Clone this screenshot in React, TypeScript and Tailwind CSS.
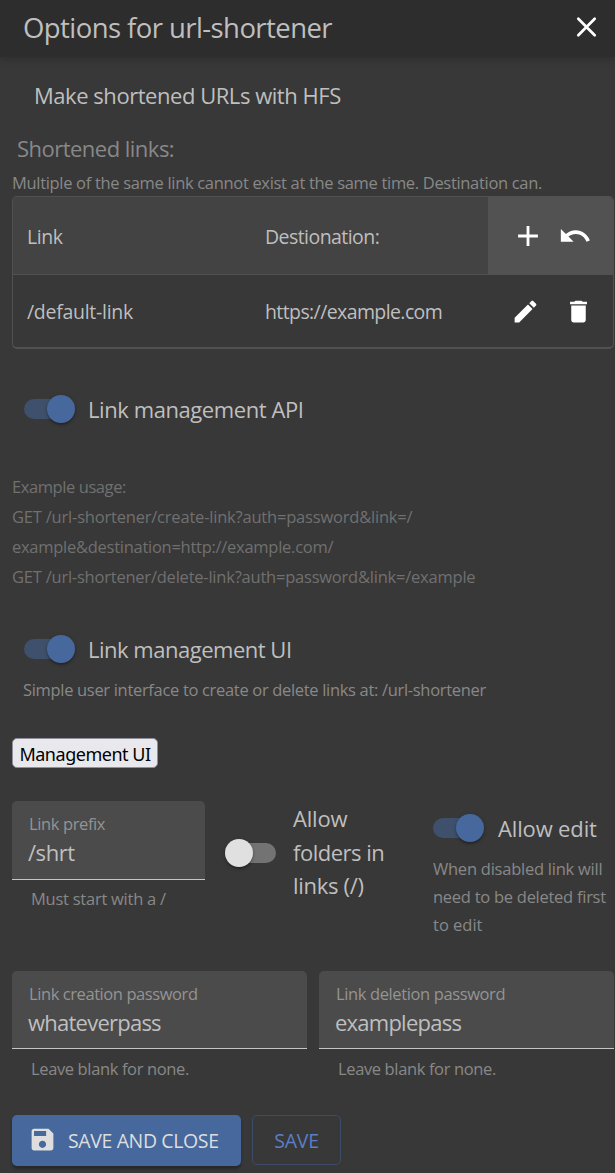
import type { ReactNode } from 'react';

function Icon({ d, className }: { d: string; className: string }) {
  return (
    <svg viewBox="0 0 24 24" fill="currentColor" className={className} aria-hidden="true">
      <path d={d} />
    </svg>
  );
}

const icons = {
  add: 'M19 13h-6v6h-2v-6H5v-2h6V5h2v6h6v2z',
  undo: 'M12.5 8c-2.65 0-5.05.99-6.9 2.6L2 7v9h9l-3.62-3.62c1.39-1.16 3.16-1.88 5.12-1.88 3.54 0 6.55 2.31 7.6 5.5l2.37-.78C21.08 11.03 17.15 8 12.5 8z',
  edit: 'M3 17.25V21h3.75L17.81 9.94l-3.75-3.75L3 17.25zM20.71 7.04c.39-.39.39-1.02 0-1.41l-2.34-2.34a.9959.9959 0 0 0-1.41 0l-1.83 1.83 3.75 3.75 1.83-1.83z',
  trash: 'M6 19c0 1.1.9 2 2 2h8c1.1 0 2-.9 2-2V7H6v12zM19 4h-3.5l-1-1h-5l-1 1H5v2h14V4z',
  save: 'M17 3H5c-1.11 0-2 .9-2 2v14c0 1.1.89 2 2 2h14c1.1 0 2-.9 2-2V7l-4-4zm-5 16c-1.66 0-3-1.34-3-3s1.34-3 3-3 3 1.34 3 3-1.34 3-3 3zm3-10H5V5h10v4z',
};

function Switch({ on }: { on: boolean }) {
  return (
    <button
      role="switch"
      aria-checked={on}
      className={`grid h-7 w-[51px] shrink-0 items-center ${on ? 'justify-items-end' : 'justify-items-start'}`}
    >
      <span
        className={`col-start-1 row-start-1 h-5 w-12 rounded-full ${on ? 'justify-self-start bg-[#3e506b]' : 'justify-self-end bg-[#737373]'}`}
      />
      <span
        className={`col-start-1 row-start-1 size-7 rounded-full shadow-[0_2px_2px_rgba(0,0,0,0.25),0_1px_4px_rgba(0,0,0,0.15)] ${on ? 'bg-[#46689d]' : 'bg-[#e0e0e0]'}`}
      />
    </button>
  );
}

interface FieldProps {
  label: ReactNode;
  value: ReactNode;
  helper: ReactNode;
  width: string;
  box: string;
}

function Field({ label, value, helper, width, box }: FieldProps) {
  return (
    <div className={`flex shrink-0 flex-col ${width}`}>
      <div className={`rounded-t-[5px] border-b border-[#c6c6c6] bg-[#4b4b4b] pt-3 pl-4 ${box}`}>
        <div className="h-[22px] pl-px text-[16.5px] leading-[22px] text-[#949494]">{label}</div>
        <div className="mt-0.5 h-[30px] text-[22px] leading-[30px] text-[#bfbfbf]">{value}</div>
      </div>
      <div className="h-[22px] pl-[19px] text-[16.5px] leading-[22px] text-[#888888]">{helper}</div>
    </div>
  );
}

export default function App() {
  return (
    <div className="flex h-[1173px] w-[615px] flex-col overflow-hidden bg-[#383838] font-['Open_Sans',sans-serif] whitespace-nowrap text-[#bfbfbf]">
      <header className="flex h-[57px] shrink-0 items-center justify-between bg-[#2d2d2d] pr-[15px] pb-[3px] pl-[23px] shadow-[0_2px_9px_rgba(0,0,0,0.22)]">
        <h1 className="pt-0.5 text-[27.5px] leading-9 tracking-[-0.57px]">Options for url-shortener</h1>
        <button className="text-white" aria-label="Close">
          <svg viewBox="0 0 27 27" className="size-[27px]" fill="none" stroke="currentColor" strokeWidth="2.7" strokeLinecap="round">
            <path d="M5.3 4.8 21.7 21.2M21.7 4.8 5.3 21.2" />
          </svg>
        </button>
      </header>

      <main className="flex flex-col pl-3">
        <p className="mt-[22px] h-[33px] pl-[22px] text-[22px] leading-[33px] tracking-[-0.46px]">Make shortened URLs with HFS</p>
        <h2 className="mt-[23px] h-[26px] pl-[5px] text-[22px] leading-[26px] tracking-[-0.52px] text-[#888888]">Shortened links:</h2>
        <p className="mt-[11px] h-[22px] text-[16.5px] leading-[22px] tracking-[-0.32px] text-[#888888]">
          Multiple of the same link cannot exist at the same time. Destination can.
        </p>

        <section className="mt-0.5 flex h-[153px] w-[602px] flex-col overflow-hidden rounded-[5px] border border-b-2 border-[#515151] text-[19.5px]">
          <div className="flex h-[78px] border-b border-[#515151] bg-[#434343]">
            <div className="flex w-[238px] items-center pt-0.5 pl-[14px] tracking-[-0.45px]">Link</div>
            <div className="flex w-[237px] items-center pt-0.5 pl-[14px] tracking-[-0.56px]">Destionation:</div>
            <div className="flex flex-1 items-center gap-[13px] bg-[#525252] pl-[23px] text-white">
              <Icon d={icons.add} className="size-[34px]" />
              <Icon d={icons.undo} className="size-[34px]" />
            </div>
          </div>
          <div className="flex flex-1">
            <div className="flex w-[238px] items-center pt-0.5 pl-[14px] tracking-[-0.28px]">/default-link</div>
            <div className="flex w-[237px] items-center pt-0.5 pl-[14px] tracking-[-0.6px]">https://example.com</div>
            <div className="flex flex-1 items-center gap-6 pl-[23px] text-white">
              <Icon d={icons.edit} className="size-[29px]" />
              <Icon d={icons.trash} className="size-[29px]" />
            </div>
          </div>
        </section>

        <div className="mt-[45px] flex h-[30px] items-center pl-3">
          <Switch on />
          <span className="pb-px pl-[13px] text-[22px] leading-[30px] tracking-[-0.42px]">Link management API</span>
        </div>

        <div className="mt-12 text-[16.5px] leading-[30px] text-[#707070]">
          <p className="tracking-[-0.42px]">Example usage:</p>
          <p className="tracking-[-0.2px]">GET /url-shortener/create-link?auth=password&amp;link=/</p>
          <p className="tracking-[-0.27px]">example&amp;destination=http://example.com/</p>
          <p className="tracking-[-0.22px]">GET /url-shortener/delete-link?auth=password&amp;link=/example</p>
        </div>

        <div className="mt-[42px] flex h-[30px] items-center pl-3">
          <Switch on />
          <span className="pb-px pl-[13px] text-[22px] leading-[30px] tracking-[-0.49px]">Link management UI</span>
        </div>
        <p className="mt-[15px] h-[22px] pl-[11px] text-[16.5px] leading-[22px] tracking-[-0.32px] text-[#888888]">
          Simple user interface to create or delete links at: /url-shortener
        </p>

        <button className="mt-[37px] flex h-[30px] w-[146px] items-center justify-center rounded-[5px] border border-[#8f8f9d] bg-[#e9e9ed] pt-0.5 font-['Noto_Sans',sans-serif] text-[18px] leading-6 tracking-[-0.48px] text-black">
          Management UI
        </button>

        <div className="mt-[33px] flex h-[170px]">
          <Field
            width="w-[193px]"
            box="h-[79px] mb-2"
            label={<span className="tracking-[-0.38px]">Link prefix</span>}
            value={<span className="tracking-[-0.45px]">/shrt</span>}
            helper={<span className="tracking-[-0.25px]">Must start with a /</span>}
          />
          <div className="ml-5 flex h-[103px] items-center">
            <Switch on={false} />
            <div className="pl-[17px] text-[22px] leading-[33.5px]">
              <p className="tracking-[-0.2px]">Allow</p>
              <p className="tracking-[-0.5px]">folders in</p>
              <p className="tracking-[-0.3px]">links (/)</p>
            </div>
          </div>
          <div className="flex w-[182px] flex-col pl-0 ml-auto">
            <div className="mt-[13px] flex h-7 items-center">
              <Switch on />
              <span className="pb-px pl-[14px] text-[22px] leading-7 tracking-[-0.15px]">Allow edit</span>
            </div>
            <div className="mt-[13px] text-[16.5px] leading-7 text-[#888888]">
              <p className="tracking-[-0.24px]">When disabled link will</p>
              <p className="tracking-[-0.27px]">need to be deleted first</p>
              <p>to edit</p>
            </div>
          </div>
        </div>

        <div className="flex h-36 gap-3">
          <Field
            width="w-[295px]"
            box="h-[78px] mb-[9px]"
            label={<span className="tracking-[-0.42px]">Link creation password</span>}
            value={<span className="tracking-[-0.76px]">whateverpass</span>}
            helper={<span className="tracking-[-0.37px]">Leave blank for none.</span>}
          />
          <Field
            width="w-[295px]"
            box="h-[78px] mb-[9px]"
            label={<span className="tracking-[-0.38px]">Link deletion password</span>}
            value={<span className="tracking-[-0.76px]">examplepass</span>}
            helper={<span className="tracking-[-0.37px]">Leave blank for none.</span>}
          />
        </div>

        <div className="flex items-start gap-[11px] text-[19.5px]">
          <button className="flex h-[51px] w-[229px] items-center rounded-[5px] bg-[#46689d] pl-4 text-[#dedede] shadow-[0_3px_3px_rgba(0,0,0,0.3)]">
            <Icon d={icons.save} className="mb-0.5 size-[29px]" />
            <span className="pt-px pl-[11px] tracking-[-0.38px]">SAVE AND CLOSE</span>
          </button>
          <button className="flex h-[50px] w-[89px] items-center justify-center rounded-[5px] border border-[#3c4c66] pt-0.5 tracking-[-0.2px] text-[#5b7fc7]">
            SAVE
          </button>
        </div>
      </main>
    </div>
  );
}
